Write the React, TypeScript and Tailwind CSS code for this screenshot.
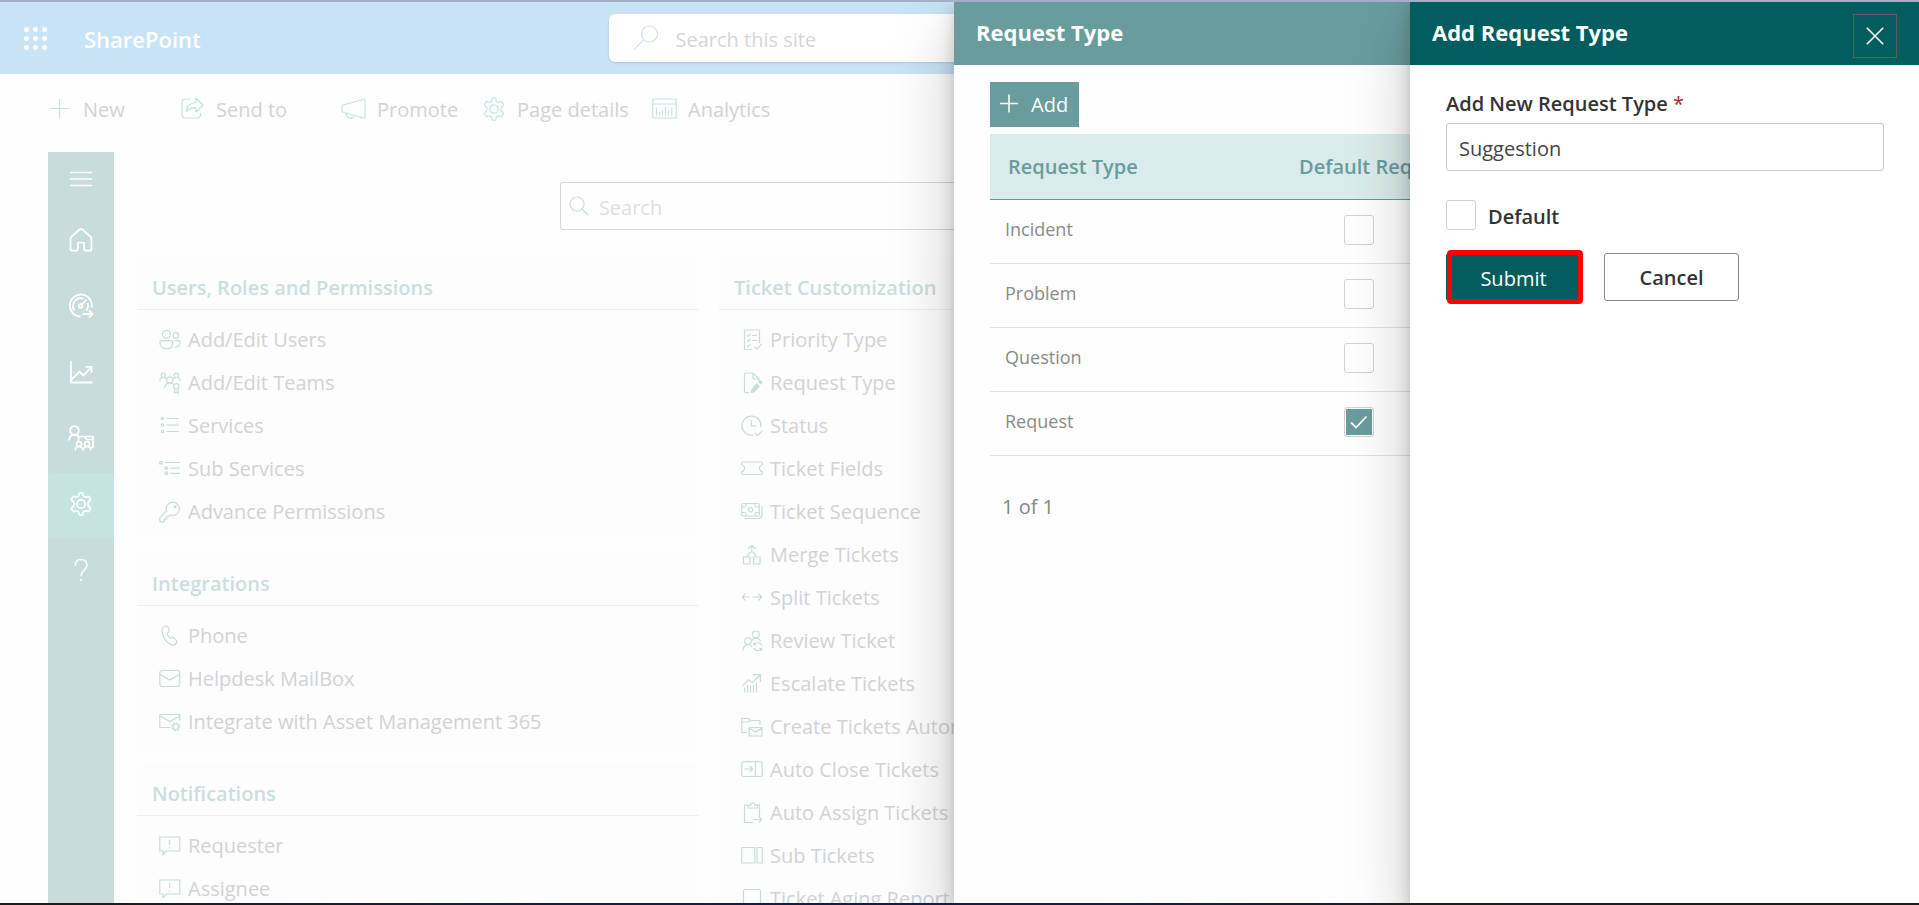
import React from "react";

type IconProps = { className?: string; children: React.ReactNode; box?: number };

function Icon({ className = "size-[22px]", box = 22, children }: IconProps) {
  return (
    <svg
      viewBox={`0 0 ${box} ${box}`}
      className={`${className} shrink-0`}
      fill="none"
      stroke="currentColor"
      strokeWidth="1.2"
      aria-hidden="true"
    >
      {children}
    </svg>
  );
}

const gearPath =
  "M9.9 3.2 10.200 1.600Q10.400.8 11.200.8h1.600q.8 0 1 .8l.5 2q.2.9 1 1.300.8.5 1.600.2l2-.6q.8-.2 1.200.5l1.200 2.100q.4.700-.2 1.300l-1.500 1.400q-.6.600-.6 1.500v1.400q0 .9.6 1.500l1.500 1.400q.6.600.2 1.300l-1.200 2.100q-.4.700-1.200.5l-2-.6q-.8-.3-1.600.2-.8.400-1 1.300l-.5 2q-.2.800-1 .8h-1.600q-.8 0-1-.8l-.5-2q-.2-.9-1-1.300-.8-.5-1.600-.2l-2 .6q-.8.200-1.200-.5l-1.200-2.100q-.4-.7.2-1.300l1.500-1.400q.6-.6.6-1.500v-1.400q0-.9-.6-1.500L2.900 8.400q-.6-.6-.2-1.300l1.200-2.100q.4-.7 1.200-.5l2 .6q.8.300 1.600-.2.8-.4 1-1.300z";

const icons = {
  users: (
    <Icon>
      <circle cx="7.4" cy="5.3" r="4" />
      <circle cx="16.7" cy="6.4" r="2.8" />
      <path d="M2.6 11.6h9.6a1.7 1.7 0 0 1 1.7 1.7c0 4.3-2.3 6.5-6.5 6.5S.9 17.6.9 13.3a1.700 1.700 0 0 1 1.700-1.700z" />
      <path d="M15.700 11.600h4.100a1.300 1.300 0 0 1 1.300 1.300c0 3.400-1.900 5.400-5.300 5.300" />
    </Icon>
  ),
  teams: (
    <Icon>
      <circle cx="4.3" cy="3.3" r="2.2" />
      <circle cx="17.3" cy="3.3" r="2.2" />
      <circle cx="10.8" cy="8" r="3.1" />
      <path d="M.8 9.200c0-2.300 1.400-3.700 3.500-3.700 1.700 0 2.700.8 3.200 2.100M14.100 7.500c.6-1.300 1.700-2 3.200-2 2.200 0 3.800 1.500 3.800 3.800M5.600 15.800c.4-2.900 2.300-4.700 5.200-4.700 1.300 0 2.400.4 3.200 1.100" />
      <circle cx="17.3" cy="14.3" r="2.7" />
      <path d="M15.500 16.500v4.400l1.800-1 1.800 1v-4.400" />
    </Icon>
  ),
  list: (
    <Icon>
      <path d="M2.500 2.500h2v2h-2zM2.500 9h2v2h-2zM2.500 15.500h2v2h-2zM7.500 3.500H20M7.500 10H20M7.500 16.500H20" />
    </Icon>
  ),
  subList: (
    <Icon>
      <path d="M.8 3.500h2.400v2.400H.8zM6.300 9h2.200v2.200H6.300zM6.300 14.200h2.200v2.200H6.300zM6 4.500h15M11 10.200h10M11 15.300h10" />
    </Icon>
  ),
  key: (
    <Icon>
      <path d="M14 1.200a6.800 6.800 0 0 0-6.500 8.700L1.200 16.200a1.500 1.500 0 0 0-.4 1v2.300c0 .8.500 1.300 1.300 1.300h2c.8 0 1.300-.5 1.300-1.300v-1.300h1.300c.8 0 1.200-.5 1.200-1.200v-1.400h1.400l1.800-1.500A6.700 6.700 0 1 0 14 1.200z" />
      <circle cx="16" cy="5.8" r=".9" fill="currentColor" />
    </Icon>
  ),
  phone: (
    <Icon>
      <path d="M5.500 1.500c1.800-.8 3.200-.4 3.900 1.300l.7 1.700c.5 1.200.2 2-.7 2.900l-1.100 1c-.3.900 1.600 4.200 3.100 4.700l1.700-.5c1.100-.3 2 0 2.700.9l1.300 1.700c1 1.400.8 2.600-.4 3.800-1.400 1.500-3.200 1.600-5.200.5C7.600 17.300 4.200 12.200 3.200 6.900c-.4-2.700.3-4.500 2.300-5.400z" />
    </Icon>
  ),
  mail: (
    <Icon>
      <rect x=".8" y="2.5" width="20" height="16" rx="2.5" />
      <path d="m1 6.500 9.800 5.500 9.800-5.500" />
    </Icon>
  ),
  mailCog: (
    <Icon>
      <path d="M11.500 16.500H.8v-13h20V10M1 5l9.800 5.500L20.600 5" />
      <circle cx="16.8" cy="15.7" r="2.8" />
      <circle cx="16.8" cy="15.7" r="4" strokeDasharray="1.5 1.64" />
    </Icon>
  ),
  comment: (
    <Icon>
      <path d="M.8 2h20v14H7.500L4 19.500V16H.8zM10.500 5v5M10.500 12v1.500" />
    </Icon>
  ),
  checklist: (
    <Icon>
      <path d="M11 20.500H3.500V1h15v13M6 6.300l1.200 1.200L9.500 5M6 11.300l1.200 1.200 2.300-2.500M6 16.300l1.200 1.200 2.300-2.500M11 6.500h5M11 11.500h5M13.500 17.500l2.500 2.700 5-5.500" />
    </Icon>
  ),
  docEdit: (
    <Icon>
      <path d="M8 20.700H5.200a1.700 1.700 0 0 1-1.700-1.700V2.700C3.500 1.700 4.200 1 5.200 1H12l6 6v2M12 1v4.500A1.500 1.500 0 0 0 13.500 7H18" />
      <path
        d="m15.500 11 3.500 3.500-6 5.900-3.500.9.800-3.800zM17 9.700l1.500-1.200c1.700-.8 3.500 1 2.600 2.800l-1.200 1.400z"
        fill="currentColor"
        stroke="none"
      />
    </Icon>
  ),
  clock: (
    <Icon>
      <path d="M12.500 19.900A9.500 9.500 0 1 1 19.900 12M10.400 5v5.800h5M13.800 18l2.700 2.700 5-5.400" />
    </Icon>
  ),
  ticket: (
    <Icon>
      <path d="M2.200 4h17.600c.8 0 1.400.5 1.400 1.300v1.400c-3.700 1.200-3.700 5.800 0 7v1.500c0 .8-.6 1.300-1.400 1.300H2.200c-.8 0-1.400-.5-1.400-1.300v-1.500c3.700-1.200 3.700-5.800 0-7V5.300C.8 4.500 1.400 4 2.200 4z" />
    </Icon>
  ),
  money: (
    <Icon>
      <rect x=".8" y="2.5" width="17.5" height="12.5" rx="1.5" />
      <circle cx="9.5" cy="8.7" r="2.2" />
      <path d="M5 2.500v2A1.500 1.500 0 0 1 3.500 6H.8M14 2.500v2A1.500 1.500 0 0 0 15.500 6h2.800M5 15v-2a1.500 1.500 0 0 0-1.500-1.500H.8M14 15v-2a1.500 1.500 0 0 1 1.500-1.500h2.800M21 5v8.500c0 2.500-1.500 4-4 4H4" />
    </Icon>
  ),
  merge: (
    <Icon>
      <path d="M2.500 13h6.500v7H2.500zM12.500 13H19v7h-6.500zM7 10.500l3.800-3 3.700 3M10.800 1.500v7M7 5l3.800-3.700L14.500 5M6 12.500l2-2M15.500 12.500l-2-2" />
    </Icon>
  ),
  split: (
    <Icon>
      <path d="M9 10H1.200m3.300-3.500L1.200 10l3.300 3.500M12.500 10h8.300m-3.300-3.500L20.800 10l-3.300 3.500" />
    </Icon>
  ),
  review: (
    <Icon>
      <circle cx="14.8" cy="4.5" r="3.5" />
      <circle cx="7" cy="11.2" r="3.3" />
      <path d="M2 20.500c.3-3.700 2.200-5.600 5-5.800M11 10.300c1-1.500 2.200-2.200 3.800-2.200 2.400 0 4.200 1.300 4.900 3.500M20.800 15.500c-1.200-3.600-6.500-3.500-7.800-.5m0-2.500V15h2.500M12.800 18c1.300 3.400 6.500 3.400 7.800.4m0 2.500v-2.500h-2.500M9 15c1 .5 1.500 1 2 2" />
    </Icon>
  ),
  escalate: (
    <Icon>
      <path d="m2 12.500 5.700-5.700 3.500 3 8-7.800M12 1.600h7.500V9M3.500 14.500v5M6.500 11.500v8M9.500 12.500v7M12.500 12v7.500M15.500 9.500v10" />
    </Icon>
  ),
  folderMail: (
    <Icon>
      <path d="M6 16.500H.8V2.500h7l1.700 2H19V9M.8 6h6l2-1.500" />
      <path d="M8 11.500h13v8.500H8zM8 12l6.500 4 6.500-4" />
    </Icon>
  ),
  panelClose: (
    <Icon>
      <rect x=".8" y="2.7" width="20.4" height="14.8" rx="2" />
      <path d="M14.500 2.700v14.800M3.500 10h8M8.700 7l3 3-3 3" />
    </Icon>
  ),
  clipboard: (
    <Icon>
      <path d="M12 20.500H3.500V3h4M15.500 3h3v12M7 6V3.500h2.500c0-3 4.500-3 4.500 0h2.500V6zM12.500 17.500h8.300m-3-3 3 3-3 3" />
    </Icon>
  ),
  columns: (
    <Icon>
      <path d="M.8 2.500h13v15.500H.8zM16 2.500h5.200v15.500H16z" />
    </Icon>
  ),
  report: (
    <Icon>
      <rect x="2.5" y="1.5" width="17" height="19" rx="1.5" />
    </Icon>
  ),
};

type Entry = { label: string; icon: React.ReactNode };
type Section = { title: string; items: Entry[] };

const leftSections: Section[] = [
  {
    title: "Users, Roles and Permissions",
    items: [
      { label: "Add/Edit Users", icon: icons.users },
      { label: "Add/Edit Teams", icon: icons.teams },
      { label: "Services", icon: icons.list },
      { label: "Sub Services", icon: icons.subList },
      { label: "Advance Permissions", icon: icons.key },
    ],
  },
  {
    title: "Integrations",
    items: [
      { label: "Phone", icon: icons.phone },
      { label: "Helpdesk MailBox", icon: icons.mail },
      { label: "Integrate with Asset Management 365", icon: icons.mailCog },
    ],
  },
  {
    title: "Notifications",
    items: [
      { label: "Requester", icon: icons.comment },
      { label: "Assignee", icon: icons.comment },
    ],
  },
];

const middleSections: Section[] = [
  {
    title: "Ticket Customization",
    items: [
      { label: "Priority Type", icon: icons.checklist },
      { label: "Request Type", icon: icons.docEdit },
      { label: "Status", icon: icons.clock },
      { label: "Ticket Fields", icon: icons.ticket },
      { label: "Ticket Sequence", icon: icons.money },
      { label: "Merge Tickets", icon: icons.merge },
      { label: "Split Tickets", icon: icons.split },
      { label: "Review Ticket", icon: icons.review },
      { label: "Escalate Tickets", icon: icons.escalate },
      { label: "Create Tickets Automatically", icon: icons.folderMail },
      { label: "Auto Close Tickets", icon: icons.panelClose },
      { label: "Auto Assign Tickets", icon: icons.clipboard },
      { label: "Sub Tickets", icon: icons.columns },
      { label: "Ticket Aging Report", icon: icons.report },
    ],
  },
];

function SettingsCard({ title, items }: Section) {
  return (
    <section className="bg-[#fdfdfd] pb-1.5">
      <h2 className="flex h-[52px] items-center border-b border-[#efefef] px-[15px] pt-2 font-semibold text-[#cbdedd]">
        {title}
      </h2>
      <ul className="pt-2">
        {items.map((item) => (
          <li key={item.label}>
            <a href="#" className="flex h-[43px] items-center gap-[7px] pl-[22px] text-[#c8dcdb]">
              {item.icon}
              <span className="whitespace-nowrap text-[#d2d2d4]">{item.label}</span>
            </a>
          </li>
        ))}
      </ul>
    </section>
  );
}

function SiteHeader() {
  return (
    <header className="grid h-[72px] grid-cols-[1fr_minmax(0,702px)_1fr] items-center bg-[#c8e3f6]">
      <div className="flex items-center gap-[37px] pl-6">
        <button type="button" aria-label="App launcher" className="text-white">
          <svg viewBox="0 0 23 23" className="size-[23px]" fill="currentColor" aria-hidden="true">
            {[2.5, 11.5, 20.5].map((y) =>
              [2.5, 11.5, 20.5].map((x) => <circle key={`${x}-${y}`} cx={x} cy={y} r="2.5" />)
            )}
          </svg>
        </button>
        <a href="#" className="pt-0.5 text-[22px] font-semibold text-white">
          SharePoint
        </a>
      </div>
      <div className="flex h-12 items-center gap-[17px] rounded-md bg-white pl-6 text-[#cfdff5] shadow-sm">
        <Icon box={26} className="size-[26px]">
          <circle cx="16.5" cy="9" r="8" />
          <path d="M10.800 14.700.8 24.700" />
        </Icon>
        <input
          type="search"
          aria-label="Search this site"
          placeholder="Search this site"
          className="w-full bg-transparent pt-0.5 text-[#d6d6d6] outline-none placeholder:text-[#d6d6d6]"
        />
      </div>
    </header>
  );
}

function CommandBar() {
  const button = "flex items-center gap-[11px] text-[#c5e2e1]";
  const text = "text-[#d2d2d4]";
  return (
    <nav aria-label="Page commands" className="flex h-[70px] items-center pl-12">
      <button type="button" className={`${button} w-[133px]`}>
        <Icon box={24} className="size-6">
          <path d="M2 11.500h19M11.500 2v19" />
        </Icon>
        <span className={text}>New</span>
      </button>
      <button type="button" className={`${button} w-[160px]`}>
        <Icon box={24} className="size-6">
          <path d="M10 2H4.500A3.500 3.500 0 0 0 1 5.500v12A3.500 3.500 0 0 0 4.500 21h11.500a3.500 3.500 0 0 0 3.500-3.500V16" />
          <path d="M15 1v4.500C9 6 5.500 9 5.500 14.500c2.300-3 5-4 9.500-3.800V15l7-7z" strokeLinejoin="round" />
        </Icon>
        <span className={text}>Send to</span>
      </button>
      <button type="button" className={`${button} w-[141px]`}>
        <Icon box={25} className="size-[25px]">
          <path d="M22.500 2.500 2 8a1 1 0 0 0-1 1v5a1 1 0 0 0 1 1l20.500 6c.8.200 1.500-.2 1.500-1V3.300c0-.7-.7-1-1.500-.8zM5.500 16.200c-.5 5.500 6.500 7 7.800 2.200" />
        </Icon>
        <span className={text}>Promote</span>
      </button>
      <button type="button" className={`${button} w-[170px]`}>
        <Icon box={24} className="size-6">
          <path d={gearPath} strokeLinejoin="round" />
          <circle cx="12" cy="12" r="4.2" />
        </Icon>
        <span className={text}>Page details</span>
      </button>
      <button type="button" className={button}>
        <Icon box={25} className="size-[25px]">
          <path d="M.8 2h23.400v19H.8zM.8 7h23.400M4.500 10.500v8M7.500 15v3.500M10.500 13.500v5M13.500 10v8.500M16.500 13.500v5M19.800 10.500v8" />
        </Icon>
        <span className={text}>Analytics</span>
      </button>
    </nav>
  );
}

function SideNav() {
  const item = "flex h-[66px] w-full items-center justify-center pb-1";
  return (
    <nav aria-label="Main" className="w-[66px] shrink-0 bg-[#c8dcdb] text-white">
      <button
        type="button"
        aria-label="Menu"
        className="flex h-[57px] w-full items-center justify-center pb-1"
      >
        <Icon box={24} className="size-6">
          <path d="M1 5.500h22M1 12h22M1 18.500h22" strokeWidth="1.5" />
        </Icon>
      </button>
      <a href="#" aria-label="Home" className={item}>
        <Icon box={24} className="size-6">
          <path
            d="M10.600 1.500a2.200 2.200 0 0 1 2.800 0l8.500 7.700c.4.400.6.900.6 1.500v10a2 2 0 0 1-2 2h-3.300a2 2 0 0 1-2-2v-5.200a1 1 0 0 0-1-1h-4.400a1 1 0 0 0-1 1v5.200a2 2 0 0 1-2 2H3.500a2 2 0 0 1-2-2v-10c0-.6.200-1.100.6-1.500z"
            strokeWidth="1.7"
          />
        </Icon>
      </a>
      <a href="#" aria-label="Dashboard" className={item}>
        <Icon box={26} className="size-[26px]">
          <g strokeWidth="1.8">
            <path d="M12.500 23.500A11 11 0 1 1 23.700 14.500M14.500 21h10m-3.500-3.500 3.700 3.500-3.700 3.500M6.500 17.500a7.700 7.700 0 0 1 9-11.700M19.500 10a7.700 7.700 0 0 1-1.200 7.500M13 12.800 18.500 6.500" />
            <circle cx="12.5" cy="13" r="1.8" />
          </g>
        </Icon>
      </a>
      <a href="#" aria-label="Reports" className={item}>
        <Icon box={24} className="size-6">
          <path d="M2 1v21.500h21.500M2 20 10.500 11.500l4 4L22.500 7M16.500 6.800h6v6" strokeWidth="1.8" />
        </Icon>
      </a>
      <a href="#" aria-label="Teams" className={item}>
        <Icon box={26} className="size-[26px]">
          <g strokeWidth="1.7">
            <circle cx="6.5" cy="5.5" r="4.3" />
            <path d="M1 15.500c0-3.500 2-5.700 5.500-5.700 2.300 0 4 1 4.800 2.500M10.500 16v-4.500h14.500v11h-3M16 11.500l3 3h6" />
            <circle cx="11" cy="19" r="2.5" />
            <circle cx="19" cy="19" r="2.5" />
            <path d="M7 25.500c.5-2.500 2-4 4-4s3.500 1.500 4 4c.5-2.500 2-4 4-4s3.500 1.500 4 4" />
          </g>
        </Icon>
      </a>
      <a href="#" aria-label="Settings" aria-current="page" className={`${item} rounded bg-[#c6e3e2]`}>
        <Icon box={24} className="size-6">
          <path d={gearPath} strokeLinejoin="round" strokeWidth="1.7" />
          <circle cx="12" cy="12" r="4.2" strokeWidth="1.7" />
        </Icon>
      </a>
      <a href="#" aria-label="Help" className={item}>
        <Icon box={24} className="size-6">
          <path d="M6.200 8c0-4 2.300-6.500 5.900-6.500S18 3.700 18 7.300c0 4.500-6 5-6 11" strokeWidth="1.5" />
          <circle cx="12" cy="22" r="1.2" fill="currentColor" stroke="none" />
        </Icon>
      </a>
    </nav>
  );
}

function Checkbox({ id, label, checked }: { id: string; label?: string; checked?: boolean }) {
  return (
    <span className="relative inline-flex">
      <input
        id={id}
        type="checkbox"
        aria-label={label}
        defaultChecked={checked}
        className="peer size-[30px] appearance-none rounded-[3px] border border-[#d0d0d0]"
      />
      <span className="pointer-events-none absolute inset-0.5 hidden items-center justify-center bg-[#689c9d] text-white peer-checked:flex">
        <Icon className="size-5" box={20}>
          <path d="m2 10.500 5 5 10.500-11" strokeWidth="1.8" />
        </Icon>
      </span>
    </span>
  );
}

const requestTypes = [
  { name: "Incident", isDefault: false },
  { name: "Problem", isDefault: false },
  { name: "Question", isDefault: false },
  { name: "Request", isDefault: true },
];

const panelShadow = "shadow-[0_26px_58px_rgba(0,0,0,0.22),0_5px_14px_rgba(0,0,0,0.18)]";

function RequestTypePanel() {
  return (
    <aside
      aria-label="Request Type"
      className={`absolute inset-y-0 right-0 w-[965px] max-w-full bg-[#fefefe] ${panelShadow}`}
    >
      <h2 className="flex h-[63px] items-center bg-[#689c9d] px-[22px] pb-0.5 text-[22px] font-bold text-white">
        Request Type
      </h2>
      <div className="px-9 pt-[17px]">
        <button
          type="button"
          className="flex h-[45px] w-[89px] items-center gap-3 bg-[#689c9d] pl-[9px] text-white"
        >
          <Icon className="mb-1 size-5" box={20}>
            <path d="M1 10.500h18M10 1.500v18" strokeWidth="1.5" />
          </Icon>
          Add
        </button>
        <table className="mt-[7px] w-full table-fixed border-collapse text-left">
          <thead>
            <tr className="h-[65px] border-b border-[#5f9b9c] bg-[#d9ebea] text-[#689c9d]">
              <th scope="col" className="w-[291px] pl-[18px] font-semibold">
                Request Type
              </th>
              <th scope="col" className="pl-[18px] font-semibold">
                Default Request Type
              </th>
            </tr>
          </thead>
          <tbody>
            {requestTypes.map((type) => (
              <tr key={type.name} className="h-16 border-b border-[#e2e2e2] text-lg text-[#8a8a8a]">
                <td className="pb-1 pl-[15px]">{type.name}</td>
                <td className="pb-0.5 pl-[63px] align-middle">
                  <div className="flex items-center">
                    <Checkbox
                      id={`default-${type.name}`}
                      label={`${type.name} is the default`}
                      checked={type.isDefault}
                    />
                  </div>
                </td>
              </tr>
            ))}
          </tbody>
        </table>
        <p className="pt-[37px] pl-3 text-[#868686]">1 of 1</p>
      </div>
    </aside>
  );
}

function AddRequestTypePanel() {
  return (
    <aside
      role="dialog"
      aria-label="Add Request Type"
      className={`absolute inset-y-0 right-0 w-[509px] max-w-full bg-white text-[#333] ${panelShadow}`}
    >
      <header className="flex h-[63px] items-center justify-between bg-[#035c5e] px-[22px] text-white">
        <h2 className="pb-0.5 text-[22px] font-bold">Add Request Type</h2>
        <button
          type="button"
          aria-label="Close"
          className="mt-1 flex size-11 items-center justify-center border border-[#6b5b58]"
        >
          <Icon className="size-[18px]" box={18}>
            <path d="m.8.8 16.400 16.400M17.200.8.8 17.200" strokeWidth="1.6" />
          </Icon>
        </button>
      </header>
      <form className="pt-[25px] pr-[35px] pl-9" onSubmit={(event) => event.preventDefault()}>
        <label htmlFor="request-type" className="block font-semibold">
          Add New Request Type <span className="font-normal text-[#a4262c]">*</span>
        </label>
        <input
          id="request-type"
          type="text"
          defaultValue="Suggestion"
          className="mt-1.5 h-12 w-full rounded-[3px] border border-[#c8c8c8] px-3 pt-0.5 text-[#444] outline-none"
        />
        <div className="mt-[29px] flex items-center gap-3">
          <Checkbox id="is-default" />
          <label htmlFor="is-default" className="pt-0.5 font-semibold">
            Default
          </label>
        </div>
        <div className="mt-[23px] flex gap-[23px]">
          <button
            type="button"
            className="relative h-12 w-[135px] rounded-[3px] bg-[#035c5e] pt-0.5 font-medium text-white"
          >
            Submit
            <span className="pointer-events-none absolute -top-[3px] -right-[2px] -bottom-[3px] left-px rounded border-[5px] border-[#ff0000]" />
          </button>
          <button
            type="button"
            className="h-12 w-[135px] rounded-[3px] border border-[#8a8886] font-semibold"
          >
            Cancel
          </button>
        </div>
      </form>
    </aside>
  );
}

export default function App() {
  return (
    <div className="flex h-screen flex-col overflow-hidden bg-[#fefefe] font-['Open_Sans','Noto_Sans',sans-serif] text-[20px] leading-[27px]">
      <div className="h-0.5 shrink-0 bg-[#a3afc9]" />
      <div className="relative min-h-0 flex-1 overflow-hidden">
        <div className="flex h-full flex-col">
          <SiteHeader />
          <CommandBar />
          <div className="flex min-h-0 flex-1 pt-2">
            <div className="flex w-full pl-12">
              <SideNav />
              <main className="min-w-0 flex-1 pr-14 pl-[23px]">
                <div className="mx-auto mt-[30px] flex h-12 w-[51%] items-center gap-2.5 rounded-[3px] border border-[#d6d6d6] pl-2 text-[#c8dcdb]">
                  <Icon className="size-5" box={20}>
                    <circle cx="8" cy="8" r="7" />
                    <path d="m13 13 6 6" />
                  </Icon>
                  <input
                    type="search"
                    aria-label="Search settings"
                    placeholder="Search"
                    className="w-full bg-transparent pt-0.5 outline-none placeholder:text-[#dedede]"
                  />
                </div>
                <div className="mt-7 grid grid-cols-3 items-start gap-5">
                  <div className="flex flex-col gap-[15px]">
                    {leftSections.map((section) => (
                      <SettingsCard key={section.title} {...section} />
                    ))}
                  </div>
                  <div className="flex flex-col gap-[15px]">
                    {middleSections.map((section) => (
                      <SettingsCard key={section.title} {...section} />
                    ))}
                  </div>
                </div>
              </main>
            </div>
          </div>
        </div>
        <RequestTypePanel />
        <AddRequestTypePanel />
      </div>
      <div className="h-0.5 shrink-0 bg-[linear-gradient(to_right,#1c1c1c_0%,#1a1c2e_16%,#0f1b5a_30%,#0f1b5a_58%,#1c1c26_72%,#1c1c1c_100%)]" />
    </div>
  );
}
